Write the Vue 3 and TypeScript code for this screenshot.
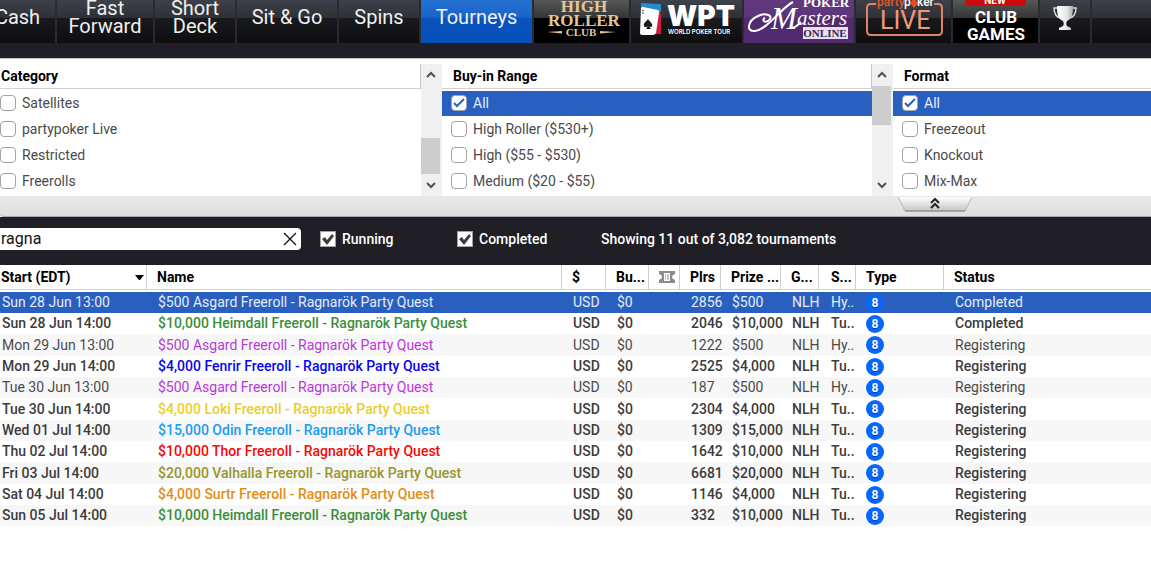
<script setup lang="ts">
import { ref } from 'vue'

interface FilterOption {
  label: string
  checked: boolean
}

interface FilterGroup {
  id: string
  title: string
  scroll: 'end' | 'start' | null
  options: FilterOption[]
}

interface Tournament {
  start: string
  name: string
  color: string
  players: number
  prize: string
  size: string
  status: string
  bold: boolean
}

const makeOptions = (labels: string[]): FilterOption[] =>
  labels.map((label) => ({ label, checked: label === 'All' }))

const filters = ref<FilterGroup[]>([
  {
    id: 'category',
    title: 'Category',
    scroll: 'end',
    options: makeOptions(['Satellites', 'partypoker Live', 'Restricted', 'Freerolls']),
  },
  {
    id: 'buyin',
    title: 'Buy-in Range',
    scroll: 'start',
    options: makeOptions(['All', 'High Roller ($530+)', 'High ($55 - $530)', 'Medium ($20 - $55)']),
  },
  {
    id: 'format',
    title: 'Format',
    scroll: null,
    options: makeOptions(['All', 'Freezeout', 'Knockout', 'Mix-Max']),
  },
])

const search = ref('ragna')
const showRunning = ref(true)
const showCompleted = ref(true)
const selected = ref(0)

const event = (
  start: string,
  name: string,
  color: string,
  players: number,
  prize: string,
  status = 'Registering',
  bold = true,
): Tournament => ({
  start,
  name: `${prize} ${name} Freeroll - Ragnarök Party Quest`,
  color,
  players,
  prize,
  size: bold ? 'Tu..' : 'Hy..',
  status,
  bold,
})

const tournaments: Tournament[] = [
  event('Sun 28 Jun 13:00', 'Asgard', 'violet', 2856, '$500', 'Completed', false),
  event('Sun 28 Jun 14:00', 'Heimdall', 'green', 2046, '$10,000', 'Completed'),
  event('Mon 29 Jun 13:00', 'Asgard', 'violet', 1222, '$500', 'Registering', false),
  event('Mon 29 Jun 14:00', 'Fenrir', 'blue', 2525, '$4,000'),
  event('Tue 30 Jun 13:00', 'Asgard', 'violet', 187, '$500', 'Registering', false),
  event('Tue 30 Jun 14:00', 'Loki', 'yellow', 2304, '$4,000'),
  event('Wed 01 Jul 14:00', 'Odin', 'sky', 1309, '$15,000'),
  event('Thu 02 Jul 14:00', 'Thor', 'red', 1642, '$10,000'),
  event('Fri 03 Jul 14:00', 'Valhalla', 'olive', 6681, '$20,000'),
  event('Sat 04 Jul 14:00', 'Surtr', 'orange', 1146, '$4,000'),
  event('Sun 05 Jul 14:00', 'Heimdall', 'green', 332, '$10,000'),
]
</script>

<template>
  <main class="lobby">
    <nav class="tabs">
      <button class="tab cut">Cash</button>
      <button class="tab">Fast<br />Forward</button>
      <button class="tab">Short<br />Deck</button>
      <button class="tab">Sit &amp; Go</button>
      <button class="tab">Spins</button>
      <button class="tab active">Tourneys</button>

      <button class="tab roller" aria-label="High Roller Club">
        <svg width="95" height="52" viewBox="0 0 95 52">
          <g fill="#e3c795" text-anchor="middle" class="serif">
            <text x="50" y="21" font-size="17">HIGH</text>
            <text x="50" y="35" font-size="17">ROLLER</text>
            <text x="47" y="45" font-size="11">CLUB</text>
          </g>
          <path d="M13 41 L28 40 V42.500 Z M82 41 L66 40 V42.500 Z" fill="#e3c795" />
        </svg>
      </button>

      <button class="tab" aria-label="World Poker Tour">
        <svg width="111" height="52" viewBox="0 0 111 52">
          <path d="M10 12 L30 13 V21 L10 18 Z" fill="#268bd0" />
          <path d="M26 21 L30 22 V43 L24 43 Z" fill="#d3193c" />
          <path d="M10 17 Q10 16 12 16 L27 19 Q29 20 28 22 L25 42 Q24 44 22 44 L11 44 Q9 44 9 42 Z" fill="#fff" />
          <path d="M17 28 C15 31 12 32 13 35 C14 37 16 36 17 35 L15 38 H20 L18 35 C20 37 22 36 21 33 C20 31 18 30 17 28 Z" fill="#191a20" />
          <path d="M11 19 L13 20 M11 22 H13" stroke="#444" stroke-width="1" />
          <text x="36" y="35" font-size="28" class="wide heavy" fill="#fff">WPT</text>
          <text x="37" y="43" font-size="6" class="wide" fill="#fff">WORLD POKER TOUR</text>
        </svg>
      </button>

      <button class="tab masters" aria-label="Poker Masters Online">
        <svg width="110" height="52" viewBox="0 0 110 52">
          <g class="serif" fill="#fff">
            <text x="59" y="16" font-size="13">POKER</text>
            <text x="27" y="38" font-size="31" class="script">M</text>
            <text x="53" y="34" font-size="21" class="script">asters</text>
          </g>
          <path d="M49 11 C37 17 24 38 11 40 C2 41 3 30 14 25 C22 21 30 25 25 29 C21 33 17 29 21 27 M46 37 C50 38 54 34 57 31" fill="none" stroke="#fff" stroke-width="2" />
          <rect x="59" y="36" width="45" height="12" fill="#eadff0" />
          <text x="81" y="46" font-size="11" text-anchor="middle" class="serif" fill="#3b264d">ONLINE</text>
        </svg>
      </button>

      <button class="tab" aria-label="partypoker Live">
        <svg width="95" height="52" viewBox="0 0 95 52">
          <path d="M20 13 H15 Q11 13 11 17 V40 Q11 44 15 44 H82 Q86 44 86 40 V17 Q86 13 82 13 H78" fill="none" stroke="#df8466" stroke-width="2" />
          <g class="brand" font-size="12">
            <text x="21" y="15" fill="#e65425">party</text>
            <text x="48" y="15" fill="#fff">p</text>
            <path d="M58 7 L62 12 L58 17 L54 12 Z" fill="#ed4a23" />
            <text x="61" y="15" fill="#fff">ker</text>
          </g>
          <text x="24" y="38" font-size="25" fill="#ef9878">LIVE</text>
        </svg>
      </button>

      <button class="tab club" aria-label="New Club Games">
        <svg width="85" height="52" viewBox="0 0 85 52">
          <rect x="12" y="0" width="61" height="15" rx="2" fill="#cf0a0b" />
          <g class="brand strong" fill="#fff" text-anchor="middle">
            <text x="42" y="13" font-size="10">NEW</text>
            <text x="43" y="32" font-size="17">CLUB</text>
            <text x="43" y="49" font-size="17">GAMES</text>
          </g>
        </svg>
      </button>

      <button class="tab" aria-label="Leaderboards">
        <svg width="50" height="52" viewBox="0 0 50 52">
          <defs>
            <linearGradient id="cup" x1="0" x2="1">
              <stop offset="0" stop-color="#fff" />
              <stop offset="0.6" stop-color="#e8e8e8" />
              <stop offset="1" stop-color="#a9adb3" />
            </linearGradient>
          </defs>
          <path d="M18 17 H14 C14 23 17 27 21 27 M32 17 H36 C36 23 33 27 29 27" fill="none" stroke="#d8dade" stroke-width="1.500" />
          <path d="M17 15 H33 C33 23 32 28 27 30 C26 32 26 34 27 35 L31 37 V39 H19 V37 L23 35 C24 34 24 32 23 30 C18 28 17 23 17 15 Z" fill="url(#cup)" />
        </svg>
      </button>
      <span class="tab" />
    </nav>

    <section class="filters">
      <div v-for="group in filters" :key="group.id" class="group">
        <div class="column">
          <h2>{{ group.title }}</h2>
          <label
            v-for="option in group.options"
            :key="option.label"
            class="option"
            :class="{ on: option.checked }"
          >
            <input v-model="option.checked" type="checkbox" />
            <svg v-if="option.checked" class="tick" width="16" height="16" viewBox="0 0 16 16">
              <path d="M3 8 L6 11 L13 4" fill="none" stroke="#2a62c4" stroke-width="2" />
            </svg>
            <span>{{ option.label }}</span>
          </label>
        </div>
        <div v-if="group.scroll" class="scrollbar" :class="group.scroll">
          <button aria-label="Scroll up">
            <svg width="10" height="8" viewBox="0 0 10 8"><path d="M1 6 L5 2 L9 6" /></svg>
          </button>
          <span class="track"><span class="thumb" /></span>
          <button aria-label="Scroll down">
            <svg width="10" height="8" viewBox="0 0 10 8"><path d="M1 2 L5 6 L9 2" /></svg>
          </button>
        </div>
      </div>
    </section>

    <div class="fold">
      <button aria-label="Collapse filters">
        <svg width="74" height="16" viewBox="0 0 74 16">
          <defs>
            <linearGradient id="lip" x1="0" y1="0" x2="0" y2="1">
              <stop offset="0" stop-color="#fff" />
              <stop offset="1" stop-color="#c4c4c4" />
            </linearGradient>
          </defs>
          <path d="M0 0 H74 L67 14 H7 Z" fill="url(#lip)" />
          <path d="M0 0 L7 14 H67 L74 0" fill="none" stroke="#b4b4b4" stroke-width="1" />
          <path d="M7 14 H67" stroke="#808080" stroke-width="1" />
          <path d="M33 6 L37 2 L41 6 M33 11 L37 7 L41 11" fill="none" stroke="#222" stroke-width="2" />
        </svg>
      </button>
    </div>

    <section class="searchbar">
      <div class="search">
        <input v-model="search" type="text" aria-label="Search tournaments" />
        <button aria-label="Clear search" @click="search = ''">
          <svg width="14" height="14" viewBox="0 0 14 14">
            <path d="M1 1 L13 13 M13 1 L1 13" fill="none" stroke="#111" stroke-width="1.300" />
          </svg>
        </button>
      </div>
      <label class="toggle">
        <input v-model="showRunning" type="checkbox" />
        <svg v-if="showRunning" class="tick" width="16" height="16" viewBox="0 0 16 16">
          <path d="M2 8 L5 6 L7 9 L12 3 L14 5 L7 14 Z" fill="#3d3d3d" />
        </svg>
        <span>Running</span>
      </label>
      <label class="toggle">
        <input v-model="showCompleted" type="checkbox" />
        <svg v-if="showCompleted" class="tick" width="16" height="16" viewBox="0 0 16 16">
          <path d="M2 8 L5 6 L7 9 L12 3 L14 5 L7 14 Z" fill="#3d3d3d" />
        </svg>
        <span>Completed</span>
      </label>
      <span class="count">Showing 11 out of 3,082 tournaments</span>
    </section>

    <table class="events">
      <colgroup>
        <col class="w-start" />
        <col class="w-name" />
        <col class="w-cur" />
        <col class="w-buy" />
        <col class="w-ticket" />
        <col class="w-plrs" />
        <col class="w-prize" />
        <col class="w-game" />
        <col class="w-size" />
        <col class="w-type" />
        <col />
      </colgroup>
      <thead>
        <tr>
          <th>
            <div class="sort">
              Start (EDT)
              <svg width="9" height="5" viewBox="0 0 9 5"><path d="M0 0 H9 L5 5 H4 Z" fill="#000" /></svg>
            </div>
          </th>
          <th>Name</th>
          <th>$</th>
          <th>Bu...</th>
          <th aria-label="Ticket">
            <svg width="16" height="12" viewBox="0 0 16 12">
              <path d="M0 0 H16 V3 Q13 4 13 6 Q13 8 16 9 V12 H0 V9 Q3 8 3 6 Q3 4 0 3 Z" fill="#8c8c8c" />
              <path d="M5 2 H11 V10 H5 Z" fill="#fff" />
              <path d="M6 4 H7 M8 4 H10 M6 6 H7 M8 6 H10 M6 8 H7 M8 8 H10" stroke="#8c8c8c" stroke-width="1" />
            </svg>
          </th>
          <th>Plrs</th>
          <th>Prize ...</th>
          <th>G...</th>
          <th class="size">S...</th>
          <th>Type</th>
          <th>Status</th>
        </tr>
      </thead>
      <tbody>
        <tr
          v-for="(t, i) in tournaments"
          :key="t.start"
          :class="{ bold: t.bold, selected: selected === i }"
          @click="selected = i"
        >
          <td>{{ t.start }}</td>
          <td :class="t.color">{{ t.name }}</td>
          <td>USD</td>
          <td>$0</td>
          <td></td>
          <td>{{ t.players }}</td>
          <td>{{ t.prize }}</td>
          <td>NLH</td>
          <td class="size">{{ t.size }}</td>
          <td class="type"><span class="seats">8</span></td>
          <td>{{ t.status }}</td>
        </tr>
      </tbody>
    </table>
  </main>
</template>

<style>
body {
  margin: 0;
  background: #fff;
}
</style>

<style scoped>
.lobby {
  font-family: Roboto, "Liberation Sans", sans-serif;
  font-size: 14px;
  color: #4a4a4a;
  overflow: hidden;
}

button {
  border: 0;
  padding: 0;
  background: none;
  font: inherit;
  color: inherit;
  cursor: pointer;
}

svg {
  display: block;
  flex: none;
}

/* Game tabs */
.tabs {
  display: grid;
  grid-template-columns: 55fr 96fr 80fr 100fr 80fr 111fr 95fr 111fr 110fr 95fr 85fr 50fr 59fr;
  gap: 2px;
  height: 43px;
  align-items: end;
  align-content: end;
  overflow: hidden;
  background: #2a2a31;
  border-bottom: 15px solid #201f25;
}

.tab {
  display: flex;
  align-items: center;
  justify-content: center;
  height: 52px;
  min-width: 0;
  overflow: hidden;
  background: linear-gradient(#454952 0, #2e3037 27px, #191a1e 27px, #0e0e0f 52px);
  color: #f0f0f0;
  font-size: 20px;
  line-height: 18px;
  text-align: center;
}

.tab.cut {
  padding-right: 20px;
}

.tab.active {
  background: linear-gradient(#2a78d8 0, #1a63c6 27px, #0a52bb 27px, #0650bd 52px);
}

.tab.roller,
.tab.club {
  background: linear-gradient(#6a6a6a 0, #343434 27px, #000 27px);
}

.tab.masters {
  background: linear-gradient(#653b82 0, #5c3479 27px, #512a70 27px);
}

.serif {
  font-family: "Liberation Serif", serif;
  font-weight: 700;
}

.script {
  font-style: italic;
  font-weight: 400;
}

.wide {
  font-family: Inter, sans-serif;
  font-weight: 600;
}

.heavy {
  font-weight: 900;
}

.brand {
  font-weight: 500;
}

.strong {
  font-weight: 700;
}

/* Filters */
.filters {
  display: grid;
  grid-template-columns: 442fr 451fr 258fr;
  padding-top: 5px;
  border-top: 1px solid #c0c0c0;
}

.group {
  display: flex;
  height: 132px;
  min-width: 0;
}

.column {
  flex: 1;
  min-width: 0;
}

.column h2 {
  height: 24px;
  margin: 0 0 2px;
  padding-left: 11px;
  border-right: 1px solid #c8c8c8;
  border-bottom: 1px solid #d2d2d2;
  color: #000;
  font-size: 14px;
  font-weight: 700;
  line-height: 24px;
}

.option {
  display: flex;
  box-sizing: border-box;
  align-items: center;
  gap: 6px;
  height: 25px;
  margin-bottom: 1px;
  padding: 0 0 2px 9px;
}

.group:first-child h2 {
  padding-left: 1px;
}

.group:first-child .option {
  padding-left: 0;
}

.group:last-child h2 {
  border-right: 0;
}

.option.on {
  background: #2960c0;
  color: #e6ecf7;
}

.option input,
.toggle input {
  appearance: none;
  flex: none;
  width: 16px;
  height: 16px;
  margin: 0;
  border: 1px solid #a2a2a2;
  border-radius: 4px;
  background: #fff;
}

.tick {
  margin-left: -22px;
  pointer-events: none;
}

.scrollbar {
  display: flex;
  flex-direction: column;
  width: 21px;
  background: #f0f0f0;
}

.scrollbar button {
  display: flex;
  align-items: center;
  justify-content: center;
  width: 19px;
  height: 22px;
}

.scrollbar path {
  fill: none;
  stroke: #505050;
  stroke-width: 2;
}

.track {
  display: flex;
  flex: 1;
}

.thumb {
  width: 19px;
  height: 39px;
  background: #cdcdcd;
}

.end .track {
  align-items: flex-end;
}

.end .thumb {
  height: 36px;
}

.fold {
  display: grid;
  grid-template-columns: 893fr 258fr;
  height: 20px;
  border-bottom: 1px solid #aaa;
  border-bottom-left-radius: 4px;
  background: linear-gradient(#e9e9e9, #dedede);
}

.fold button {
  grid-column: 2;
  justify-self: start;
  align-self: start;
  padding: 1px 0 0 5px;
}

/* Search */
.searchbar {
  display: flex;
  box-sizing: border-box;
  align-items: center;
  height: 48px;
  padding-bottom: 4px;
  background: #201f25;
  color: #fff;
  font-weight: 500;
}

.search {
  display: flex;
  align-items: center;
  width: 301px;
  height: 22px;
  margin-right: 19px;
  border-radius: 0 4px 4px 0;
  background: #fff;
}

.search input {
  flex: 1;
  min-width: 0;
  height: 22px;
  padding: 0 1px;
  border: 0;
  outline: 0;
  background: none;
  color: #111;
  font: 16px/22px Roboto, "Liberation Sans", sans-serif;
}

.search button {
  padding: 0 4px;
}

.toggle {
  display: flex;
  align-items: center;
  gap: 6px;
  width: 137px;
}

.toggle input {
  border-radius: 0;
}

.count {
  padding-left: 7px;
}

/* Tournament list */
.events {
  width: 100%;
  border-spacing: 0;
  table-layout: fixed;
}

.w-start { width: 147px; }
.w-name { width: 415px; }
.w-cur { width: 44px; }
.w-buy { width: 43px; }
.w-ticket { width: 31px; }
.w-plrs { width: 41px; }
.w-prize { width: 60px; }
.w-game { width: 38px; }
.w-size { width: 37px; }
.w-type { width: 88px; }

th {
  height: 24px;
  padding: 0 0 0 10px;
  border-right: 1px solid #d0d0d0;
  border-bottom: 1px solid #d2d2d2;
  color: #000;
  font-weight: 700;
  line-height: 24px;
  text-align: left;
  white-space: nowrap;
}

th:first-child {
  padding-left: 1px;
}

th:last-child {
  border-right: 0;
}

.sort {
  display: flex;
  align-items: center;
  justify-content: space-between;
  padding-right: 2px;
}

tbody::before {
  content: "";
  display: block;
  height: 2px;
}

td {
  height: 21px;
  padding: 0 0 0 11px;
  line-height: 21px;
  white-space: nowrap;
}

td:first-child {
  padding-left: 2px;
}

.size {
  padding-left: 12px;
}

.type {
  padding-left: 10px;
}

tbody tr:nth-child(3n) td {
  height: 22px;
}

tbody tr:nth-child(odd) {
  background: #f7f7f7;
}

tr.bold {
  color: #3c3c3c;
  font-weight: 500;
}

.violet { color: #b83ad6; }
.green { color: #3a8f3a; }
.blue { color: #0505f5; }
.yellow { color: #ebcd2e; }
.sky { color: #1b9cf2; }
.red { color: #fb0505; }
.olive { color: #98962c; }
.orange { color: #e38d12; }

tbody tr.selected,
tbody tr.selected td {
  background: #2960c0;
  color: #e6ecf7;
}

.seats {
  display: block;
  width: 18px;
  height: 18px;
  border-radius: 50%;
  background: #0866ff;
  color: #fff;
  font-size: 12px;
  font-weight: 700;
  line-height: 18px;
  text-align: center;
  text-shadow: 0 1px 1px #003a9e;
}
</style>
